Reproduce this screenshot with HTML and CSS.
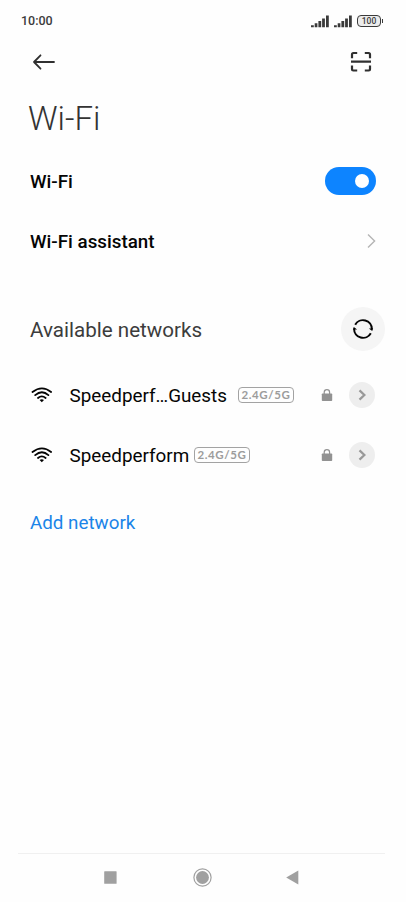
FILE: index.html
```html
<!DOCTYPE html>
<html lang="en">
<head>
<meta charset="utf-8">
<title>Wi-Fi</title>
<link rel="stylesheet" href="styles.css">
</head>
<body>
<div class="screen">
  <div class="status">
    <span class="time">10:00</span>
    <div class="indicators">
      <svg class="signal" width="18" height="13" viewBox="0 0 18 13"><path d="M0 10.200h2.800v2.100H0zM3.700 8.300h2.700v4H3.700zM7.400 6.100h2.800v6.200H7.400zM11.100 3.600h2.800v8.700h-2.800zM15 .6h2.800v11.700H15z"/></svg>
      <svg class="signal" width="18" height="13" viewBox="0 0 18 13"><path d="M0 10.200h2.800v2.100H0zM3.700 8.300h2.700v4H3.700zM7.400 6.100h2.800v6.200H7.400zM11.100 3.600h2.800v8.700h-2.800zM15 .6h2.800v11.700H15z"/></svg>
      <div class="battery"><span>100</span></div>
    </div>
  </div>
  <header class="appbar">
    <svg width="24" height="18" viewBox="0 0 24 18"><path class="stroke" d="M22 9H2M8.500 2.300 2 9l6.500 6.700"/></svg>
    <svg width="22" height="22" viewBox="0 0 22 22"><path class="stroke scan" d="M2 7.200V3.400Q2 2 3.400 2H7.200M14.800 2h3.800Q20 2 20 3.400V7.200M2 14.500v3.600Q2 19.500 3.400 19.500H7.200M14.800 19.500h3.800Q20 19.500 20 18.100V14.500M1 10.700h20"/></svg>
  </header>
  <h1 class="title">Wi-Fi</h1>
  <div class="row">
    <span class="label">Wi-Fi</span>
    <span class="toggle"></span>
  </div>
  <div class="row">
    <span class="label">Wi-Fi assistant</span>
    <svg width="9" height="16" viewBox="0 0 9 16"><path class="chevron" d="m1 1.500 6.600 6.500L1 14.500"/></svg>
  </div>
  <div class="section">
    <h2 class="heading">Available networks</h2>
    <span class="refresh">
      <svg width="22" height="22" viewBox="0 0 22 22"><path class="refresh-arc" d="M3.200 6.800A8.900 8.900 0 0 1 19.900 11.200M18.800 15.200A8.900 8.900 0 0 1 2.100 10.800"/><path d="M16.900 10.500h4.200l-.9 2.500zM5.100 11.500H.9L1.800 9z"/></svg>
    </span>
  </div>
  <div class="network">
    <svg class="wifi" width="22" height="16" viewBox="0 0 22 16"><path class="wave" d="M1.500 5Q11-2.200 20.100 5M4.200 8.100Q11 2.500 17.400 8.100M7 11Q10.800 7.700 14.600 11"/><path d="M8.600 12.900q2.200-1.400 4.400 0l-2.200 2.400z"/></svg>
    <span class="ssid guests">Speedperf…Guests</span>
    <span class="band wide">2.4G/5G</span>
    <svg class="lock" width="12" height="13" viewBox="0 0 12 13"><path class="shackle" d="M3.200 6V3.400a2.700 2.700 0 0 1 5.400 0V6"/><rect x=".8" y="4.500" width="10.400" height="7.600" rx=".8"/></svg>
    <span class="more"><svg width="8" height="12" viewBox="0 0 8 12"><path d="m1.500 1.300 4.900 4.700-4.900 4.700"/></svg></span>
  </div>
  <div class="network">
    <svg class="wifi" width="22" height="16" viewBox="0 0 22 16"><path class="wave" d="M1.500 5Q11-2.200 20.100 5M4.200 8.100Q11 2.500 17.400 8.100M7 11Q10.800 7.700 14.600 11"/><path d="M8.600 12.900q2.200-1.400 4.400 0l-2.200 2.400z"/></svg>
    <span class="ssid">Speedperform</span>
    <span class="band">2.4G/5G</span>
    <svg class="lock" width="12" height="13" viewBox="0 0 12 13"><path class="shackle" d="M3.200 6V3.400a2.700 2.700 0 0 1 5.400 0V6"/><rect x=".8" y="4.500" width="10.400" height="7.600" rx=".8"/></svg>
    <span class="more"><svg width="8" height="12" viewBox="0 0 8 12"><path d="m1.500 1.300 4.900 4.700-4.900 4.700"/></svg></span>
  </div>
  <a class="add">Add network</a>
  <nav class="nav">
    <svg width="13" height="13" viewBox="0 0 13 13"><rect x=".2" y=".2" width="12.400" height="12.600" rx=".6"/></svg>
    <svg class="home" width="19" height="19" viewBox="0 0 19 19"><circle cx="9.500" cy="9.500" r="6.400"/><circle class="ring" cx="9.500" cy="9.500" r="8.600"/></svg>
    <svg width="13" height="15" viewBox="0 0 13 15"><path d="M.2 7.500 12.300.6v13.800z"/></svg>
  </nav>
</div>
</body>
</html>
```
FILE: styles.css
```css
* { box-sizing: border-box; }
body { margin: 0; background: #fefefe; font-family: Roboto, "Liberation Sans", sans-serif; color: #050505; }
svg { display: block; flex: none; }
.screen { width: 406px; height: 902px; display: flex; flex-direction: column; overflow: hidden; }
.status { height: 42px; padding: 0 25px 0 21px; display: flex; align-items: center; justify-content: space-between; color: #3c3c3c; }
.time { margin-top: -1px; font-size: 12.5px; font-weight: 500; }
.indicators { display: flex; align-items: center; gap: 5px; }
.signal { fill: #3a3a3a; }
.battery { position: relative; width: 24px; height: 12px; border: 1.500px solid #3a3a3a; border-radius: 4px; background: #ececec; display: flex; align-items: center; justify-content: center; font-size: 8.500px; font-weight: 500; line-height: 10px; }
.battery::after { content: ""; position: absolute; right: -3px; top: 3px; width: 1px; height: 4px; background: #3a3a3a; }
.appbar { height: 40px; padding: 0 34.500px 0 32px; display: flex; align-items: center; justify-content: space-between; }
.stroke { fill: none; stroke: #303030; stroke-width: 1.800; stroke-linecap: round; stroke-linejoin: round; }
.scan { stroke-width: 2.200; stroke-linecap: butt; }
.title { height: 69px; margin: 0; padding-left: 28px; font-size: 33px; line-height: 73px; font-weight: 300; color: #333; }
.row { height: 60px; padding: 0 30px; display: flex; align-items: center; justify-content: space-between; }
.label { font-size: 18.800px; font-weight: 500; padding-top: 1px; }
.toggle { width: 51px; height: 28px; padding: 7px; border-radius: 14px; background: #0d84ff; display: flex; justify-content: flex-end; }
.toggle::before { content: ""; width: 14px; height: 14px; border-radius: 50%; background: #fff; }
.chevron { fill: none; stroke: #b5b5b5; stroke-width: 1.400; }
.section { height: 60px; margin-top: 28px; padding: 0 21px 0 30px; display: flex; align-items: center; justify-content: space-between; }
.heading { margin: 0; padding-top: 2px; font-size: 20.600px; font-weight: 400; color: #3c3c3c; }
.refresh { width: 44px; height: 44px; border-radius: 50%; background: #f5f5f5; display: flex; align-items: center; justify-content: center; }
.refresh-arc { fill: none; stroke: #050505; stroke-width: 2; }
.network { height: 60px; padding: 0 31px; display: flex; align-items: center; }
.section + .network { margin-top: 6px; }
.wifi { fill: #050505; }
.wave { fill: none; stroke: #050505; stroke-width: 1.800; stroke-linecap: round; }
.ssid { width: 120px; margin-left: 16.500px; padding-top: 1px; font-size: 18.850px; white-space: nowrap; }
.guests { width: 158px; }
.band { width: 56px; height: 16px; margin-left: 4.500px; border: 1.200px solid #a3a3a3; border-radius: 4px; color: #9c9c9c; font: 700 11.500px/14px Lato, sans-serif; letter-spacing: 0.600px; text-align: center; }
.band.wide { margin-left: 10.500px; }
.lock { margin-left: auto; fill: #929292; }
.shackle { fill: none; stroke: #929292; stroke-width: 1.200; }
.more { width: 26px; height: 26px; margin-left: 16px; border-radius: 50%; background: #eee; display: flex; align-items: center; justify-content: center; }
.more path { fill: none; stroke: #999; stroke-width: 2.300; }
.add { height: 60px; margin-top: 7px; padding-left: 30px; font-size: 18.800px; line-height: 62px; color: #1a84e8; }
.nav { height: 49px; margin: auto 21px 0 18px; padding: 0 86px 1px; border-top: 1px solid #f0f0f0; display: flex; align-items: center; justify-content: space-between; fill: #a0a0a0; }
.home { margin-left: 1px; }
.ring { fill: none; stroke: #a0a0a0; stroke-width: 1.200; }
```
